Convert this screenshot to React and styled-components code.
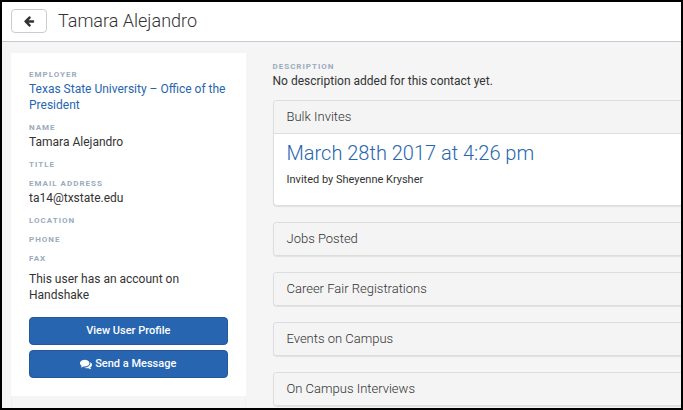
import styled, { createGlobalStyle } from 'styled-components'

const App = () => {
  return (
    <>
      <GlobalStyle />
      <Page>
        <Header>
          <BackButton type='button' aria-label='Back'>
            <ArrowIcon />
          </BackButton>
          <Name>Tamara Alejandro</Name>
        </Header>
        <Content>
          <Sidebar>
            <Card>
              <Field label='Employer'>
                <Link href='#employer'>Texas State University – Office of the President</Link>
              </Field>
              <Field label='Name'>Tamara Alejandro</Field>
              <Field label='Title' />
              <Field label='Email Address'>ta14@txstate.edu</Field>
              <Field label='Location' />
              <Field label='Phone' />
              <Field label='Fax' />
              <Note>This user has an account on Handshake</Note>
              <Actions>
                <ActionButton type='button'>View User Profile</ActionButton>
                <ActionButton type='button'>
                  <CommentsIcon />
                  Send a Message
                </ActionButton>
              </Actions>
            </Card>
          </Sidebar>
          <Main>
            <Label as='h2'>Description</Label>
            <Text>No description added for this contact yet.</Text>
            <Panels>
              <Panel title='Bulk Invites'>
                <PanelBody>
                  <InviteTitle>
                    <Link href='#invite'>March 28th 2017 at 4:26 pm</Link>
                  </InviteTitle>
                  <InviteText>Invited by Sheyenne Krysher</InviteText>
                </PanelBody>
              </Panel>
              <Panel title='Jobs Posted' />
              <Panel title='Career Fair Registrations' />
              <Panel title='Events on Campus' />
              <Panel title='On Campus Interviews' />
            </Panels>
          </Main>
        </Content>
      </Page>
    </>
  )
}

export default App

const GlobalStyle = createGlobalStyle`
  * {
    box-sizing: border-box;
    margin: 0;
    padding: 0;
  }

  body {
    font-family: Roboto, 'Liberation Sans', sans-serif;
    font-size: 12px;
    line-height: 16px;
    color: #333;
    background-color: #f5f5f5;
  }
`

const Page = styled.div`
  height: 100vh;
  display: flex;
  flex-direction: column;
  overflow: hidden;
  border: 2px solid #000;
`

const Header = styled.header`
  display: flex;
  flex-shrink: 0;
  align-items: center;
  gap: 11px;
  padding: 7px 9px 8px;
  background-color: #fff;
  border-bottom: 1px solid #c3ccd5;
`

const BackButton = styled.button`
  display: flex;
  align-items: center;
  justify-content: center;
  width: 36px;
  height: 24px;
  color: #333;
  background-color: #fff;
  border: 1px solid #ccc;
  border-radius: 4px;
`

const Name = styled.h1`
  font-size: 18px;
  font-weight: 300;
  line-height: 24px;
`

const Content = styled.div`
  display: flex;
  flex: 1;
  align-items: stretch;
  gap: 27px;
  padding: 11px 0 0 9px;
`

const Sidebar = styled.aside`
  flex: 0 0 35%;
  border: solid #f0f0f0;
  border-width: 0 1px;
`

const Card = styled.div`
  margin: 0 -1px;
  padding: 15px 18px 18px;
  background-color: #fff;
`

const Label = styled.div`
  padding-top: 1px;
  font-size: 8px;
  font-weight: 700;
  line-height: 12px;
  letter-spacing: 1px;
  text-transform: uppercase;
  color: #9aabbd;
`

const Text = styled.p`
  padding-bottom: 2px;
`

const Note = styled.p`
  padding-right: 32px;
`

const Link = styled.a`
  color: #2765b0;
  text-decoration: none;
`

const Actions = styled.div`
  display: flex;
  flex-direction: column;
  gap: 5px;
  margin-top: 14px;
`

const ActionButton = styled.button`
  display: flex;
  align-items: center;
  justify-content: center;
  gap: 3px;
  height: 28px;
  font: 500 11px/16px Roboto, 'Liberation Sans', sans-serif;
  color: #fff;
  background-color: #2765b0;
  border: 1px solid #22599b;
  border-radius: 4px;
`

const Main = styled.main`
  flex: 1;
  min-width: 0;
  padding-top: 7px;
`

const Panels = styled.div`
  display: flex;
  flex-direction: column;
  gap: 16px;
  margin-top: 9px;
`

const PanelBox = styled.section`
  background-color: #fff;
  border: 1px solid #ddd;
  border-right: 0;
  border-radius: 4px 0 0 4px;
  box-shadow: 0 1px 1px rgba(0, 0, 0, 0.08);
  overflow: hidden;
`

const PanelTitle = styled.h3`
  padding: 6px 13px;
  font-size: 13px;
  font-weight: 300;
  line-height: 20px;
  background-color: #f4f4f4;
`

const PanelBody = styled.div`
  padding: 7px 13px 17px;
  border-top: 1px solid #ddd;
`

const InviteTitle = styled.h4`
  font-size: 20px;
  font-weight: 300;
  line-height: 24px;
`

const InviteText = styled.p`
  margin-top: 7px;
  font-size: 11px;
`

/* ---------------- */

const FieldBox = styled.div`
  margin-bottom: 6px;
`

const Field = ({ label, children }) => {
  return (
    <FieldBox>
      <Label>{label}</Label>
      {children && <Text>{children}</Text>}
    </FieldBox>
  )
}

const Panel = ({ title, children }) => {
  return (
    <PanelBox>
      <PanelTitle>{title}</PanelTitle>
      {children}
    </PanelBox>
  )
}

const Icon = styled.svg`
  width: 12px;
  height: 12px;
  fill: currentColor;
`

const ArrowIcon = () => (
  <Icon viewBox='0 0 1792 1792' aria-hidden='true'>
    <path d='M1664 896v128q0 53-32.5 90.5t-84.5 37.5h-704l293 294q38 36 38 90t-38 90l-75 76q-37 37-90 37-52 0-91-37l-651-652q-37-37-37-90 0-52 37-91l651-650q38-38 91-38 52 0 90 38l75 74q38 38 38 91t-38 91l-293 293h704q52 0 84.5 37.5t32.5 90.5z' />
  </Icon>
)

const CommentsIcon = () => (
  <Icon viewBox='0 0 1792 1792' aria-hidden='true'>
    <path d='M1408 768q0 139-94 257t-256.5 186.5-353.5 68.5q-86 0-176-16-124 88-278 128-36 9-86 16h-3q-11 0-20.5-8t-11.5-21q-1-3-1-6.5t.5-6.5 2-6l2.5-5 3.5-5.5 4-5 4.5-5 4-4.5q5-6 23-25t26-29.5 22.5-29 25-38.5 20.5-44q-124-72-195-177t-71-224q0-139 94-257t256.5-186.5 353.5-68.5 353.5 68.5 256.5 186.5 94 257zm384 256q0 120-71 224.5t-195 176.5q10 24 20.5 44t25 38.5 22.5 29 26 29.5 23 25q1 1 4 4.5t4.5 5 4 5 3.5 5.5l2.5 5 2 6 .5 6.5-1 6.5q-3 14-13 22t-22 7q-50-7-86-16-154-40-278-128-90 16-176 16-271 0-472-132 58 4 88 4 161 0 309-45t264-129q125-92 192-212t67-254q0-77-23-152 129 71 204 178t75 230z' />
  </Icon>
)
